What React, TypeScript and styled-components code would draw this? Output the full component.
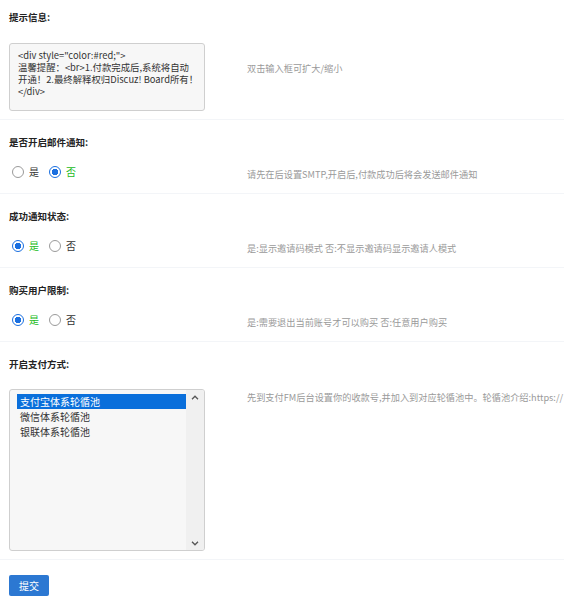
import { createGlobalStyle } from "styled-components";
import styled from "styled-components";

const GlobalStyle = createGlobalStyle`
  html, body {
    margin: 0;
    padding: 0;
    background: #ffffff;
    overflow-x: hidden;
  }
  body {
    font-family: "Noto Sans CJK SC", "Noto Sans", sans-serif;
    color: #333333;
  }
`;

const options = [
  { id: "alipay", label: "支付宝体系轮循池" },
  { id: "wechat", label: "微信体系轮循池" },
  { id: "union", label: "银联体系轮循池" }
];

const noticeText = [
  '<div style="color:#red;">',
  "温馨提醒：<br>1.付款完成后,系统将自动",
  "开通！2.最终解释权归Discuz! Board所有！",
  "</div>"
].join("\n");

const RadioGroup = ({ value }: { value: "yes" | "no" }) => (
  <RadioRow>
    <RadioItem>
      <RadioDot type="radio" checked={value === "yes"} readOnly />
      <RadioLabel $active={value === "yes"}>是</RadioLabel>
    </RadioItem>
    <RadioItem>
      <RadioDot type="radio" checked={value === "no"} readOnly />
      <RadioLabel $active={value === "no"}>否</RadioLabel>
    </RadioItem>
  </RadioRow>
);

const Chevron = ({ up }: { up?: boolean }) => (
  <svg width="8" height="5" viewBox="0 0 8 5">
    <path
      d={up ? "M1 4.2 L4 1.2 L7 4.2" : "M1 0.8 L4 3.8 L7 0.8"}
      fill="none"
      stroke="#555"
      strokeWidth="1.3"
    />
  </svg>
);

const App = () => {
  return (
    <Page>
      <GlobalStyle />
      <Section $first>
        <Title>提示信息:</Title>
        <Body>
          <Notice readOnly wrap="off" defaultValue={noticeText} />
          <Hint $top={28}>双击输入框可扩大/缩小</Hint>
        </Body>
      </Section>

      <Section>
        <Title>是否开启邮件通知:</Title>
        <Body>
          <RadioGroup value="no" />
          <Hint $top={9}>请先在后设置SMTP,开启后,付款成功后将会发送邮件通知</Hint>
        </Body>
      </Section>

      <Section>
        <Title>成功通知状态:</Title>
        <Body>
          <RadioGroup value="yes" />
          <Hint $top={9}>是:显示邀请码模式 否:不显示邀请码显示邀请人模式</Hint>
        </Body>
      </Section>

      <Section>
        <Title>购买用户限制:</Title>
        <Body>
          <RadioGroup value="yes" />
          <Hint $top={9}>是:需要退出当前账号才可以购买 否:任意用户购买</Hint>
        </Body>
      </Section>

      <Section>
        <Title>开启支付方式:</Title>
        <Body>
          <ListBox>
            <OptionList>
              {options.map((o, i) => (
                <OptionItem key={o.id} $selected={i === 0}>
                  {o.label}
                </OptionItem>
              ))}
            </OptionList>
            <ScrollTrack>
              <Chevron up />
              <Chevron />
            </ScrollTrack>
          </ListBox>
          <Hint $top={10}>
            先到支付FM后台设置你的收款号,并加入到对应轮循池中。轮循池介绍:https://
          </Hint>
        </Body>
      </Section>

      <Footer>
        <SubmitButton>提交</SubmitButton>
      </Footer>
    </Page>
  );
};

const Page = styled.div`
  width: 564px;
  overflow: hidden;
`;

const Section = styled.div<{ $first?: boolean }>`
  padding: ${({ $first }) => ($first ? "9px" : "14px")} 0 8px;
  border-bottom: 1px solid #f3f5f8;
`;

const Title = styled.div`
  padding-left: 9px;
  height: 16px;
  line-height: 16px;
  font-size: 9.5px;
  font-weight: bold;
  color: #222222;
`;

const Body = styled.div`
  display: grid;
  grid-template-columns: 238px 1fr;
  align-items: start;
  margin-top: 9px;
  padding-left: 9px;
`;

const Hint = styled.div<{ $top: number }>`
  padding-top: ${({ $top }) => $top}px;
  font-size: 9.2px;
  line-height: 12px;
  color: #9a9a9a;
  white-space: nowrap;
`;

const Notice = styled.textarea`
  box-sizing: border-box;
  display: block;
  width: 196px;
  height: 68px;
  margin: 9px 0 0;
  padding: 5px 8px 4px;
  border: 1px solid #cfcfcf;
  border-radius: 3px;
  background: #f7f7f7;
  font-family: "Noto Sans CJK SC", "Noto Sans", sans-serif;
  font-size: 9.4px;
  line-height: 12px;
  color: #333333;
  resize: none;
  overflow: hidden;
  outline: none;
`;

const RadioRow = styled.div`
  display: flex;
  align-items: center;
  gap: 10px;
  height: 26px;
  padding-left: 3px;
`;

const RadioItem = styled.label`
  display: flex;
  align-items: center;
  gap: 5px;
`;

const RadioDot = styled.input`
  appearance: none;
  box-sizing: border-box;
  width: 12px;
  height: 12px;
  margin: 0;
  border-radius: 50%;
  border: 1px solid #9a9a9a;
  background: #ffffff;

  &:checked {
    border: 1.5px solid #1a6fe0;
    background: radial-gradient(circle, #1a6fe0 0 3px, #ffffff 3.4px);
  }
`;

const RadioLabel = styled.span<{ $active: boolean }>`
  font-size: 10px;
  line-height: 12px;
  color: ${({ $active }) => ($active ? "#22bb22" : "#333333")};
`;

const ListBox = styled.div`
  box-sizing: border-box;
  display: flex;
  width: 196px;
  height: 162px;
  margin-top: 8px;
  border: 1px solid #cfcfcf;
  border-radius: 3px;
  background: #f7f7f7;
  overflow: hidden;
`;

const OptionList = styled.div`
  flex: 1;
  padding: 4px 0 0 7px;
`;

const OptionItem = styled.div<{ $selected: boolean }>`
  height: 15px;
  line-height: 15px;
  padding-left: 3px;
  font-size: 10px;
  color: ${({ $selected }) => ($selected ? "#ffffff" : "#333333")};
  background: ${({ $selected }) => ($selected ? "#0a6fdb" : "transparent")};
`;

const ScrollTrack = styled.div`
  width: 18px;
  display: flex;
  flex-direction: column;
  align-items: center;
  justify-content: space-between;
  padding: 5px 0 4px;
  background: #f0f0f0;
`;

const Footer = styled.div`
  display: flex;
  padding: 15px 9px 0;
`;

const SubmitButton = styled.button`
  width: 40px;
  height: 21px;
  padding: 0;
  border: none;
  border-radius: 2px;
  background: #2c78d2;
  color: #ffffff;
  font-family: "Noto Sans CJK SC", "Noto Sans", sans-serif;
  font-size: 10px;
`;

export default App;
